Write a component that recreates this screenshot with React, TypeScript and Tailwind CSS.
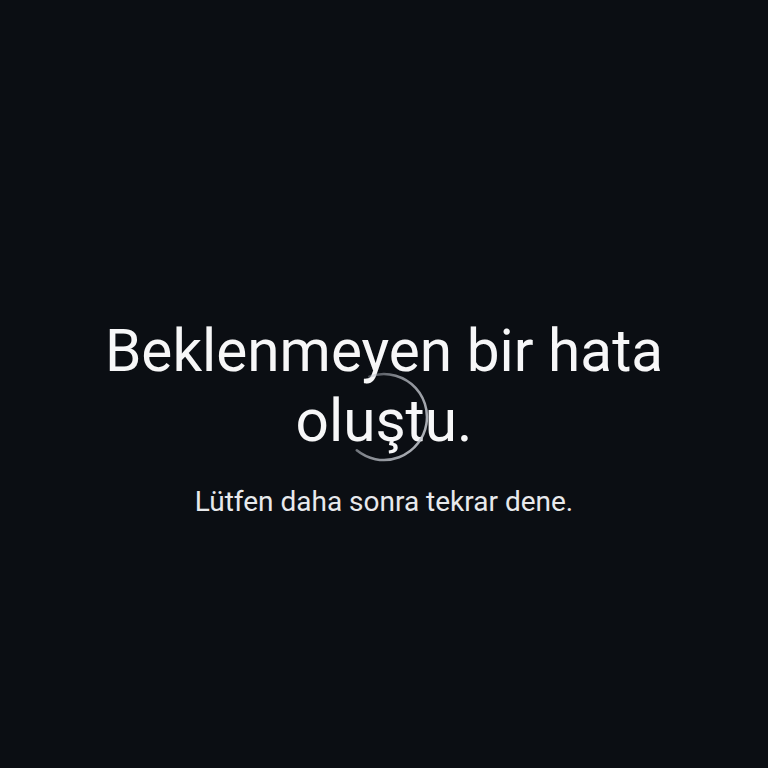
export default function App() {
  return (
    <div
      className="relative flex h-[768px] w-full flex-col items-center justify-center bg-[#0b0e13] px-8 pt-[68px] text-center"
      style={{ fontFamily: 'Roboto, "Noto Sans", sans-serif' }}
    >
      <h1 className="max-w-[640px] text-[58.5px] font-normal leading-[70px] text-[#f7f7f8]">
        Beklenmeyen bir hata oluştu.
      </h1>
      <p className="mt-7 text-[28px] leading-[36px] text-[#e8e9ec]">
        Lütfen daha sonra tekrar dene.
      </p>

      <svg
        className="pointer-events-none absolute left-[339px] top-[372px]"
        width="90"
        height="90"
        viewBox="0 0 90 90"
      >
        <defs>
          <linearGradient id="spin" x1="0" y1="0" x2="1" y2="1">
            <stop offset="0%" stopColor="#9ca3af" stopOpacity="0.05" />
            <stop offset="45%" stopColor="#b8bcc4" stopOpacity="0.7" />
            <stop offset="100%" stopColor="#c4c7cd" stopOpacity="0.95" />
          </linearGradient>
        </defs>
        <path
          d="M45 2 A43 43 0 1 1 8 67"
          fill="none"
          stroke="url(#spin)"
          strokeWidth="2.5"
          strokeLinecap="round"
          transform="rotate(-20 45 45)"
        />
      </svg>
    </div>
  )
}
